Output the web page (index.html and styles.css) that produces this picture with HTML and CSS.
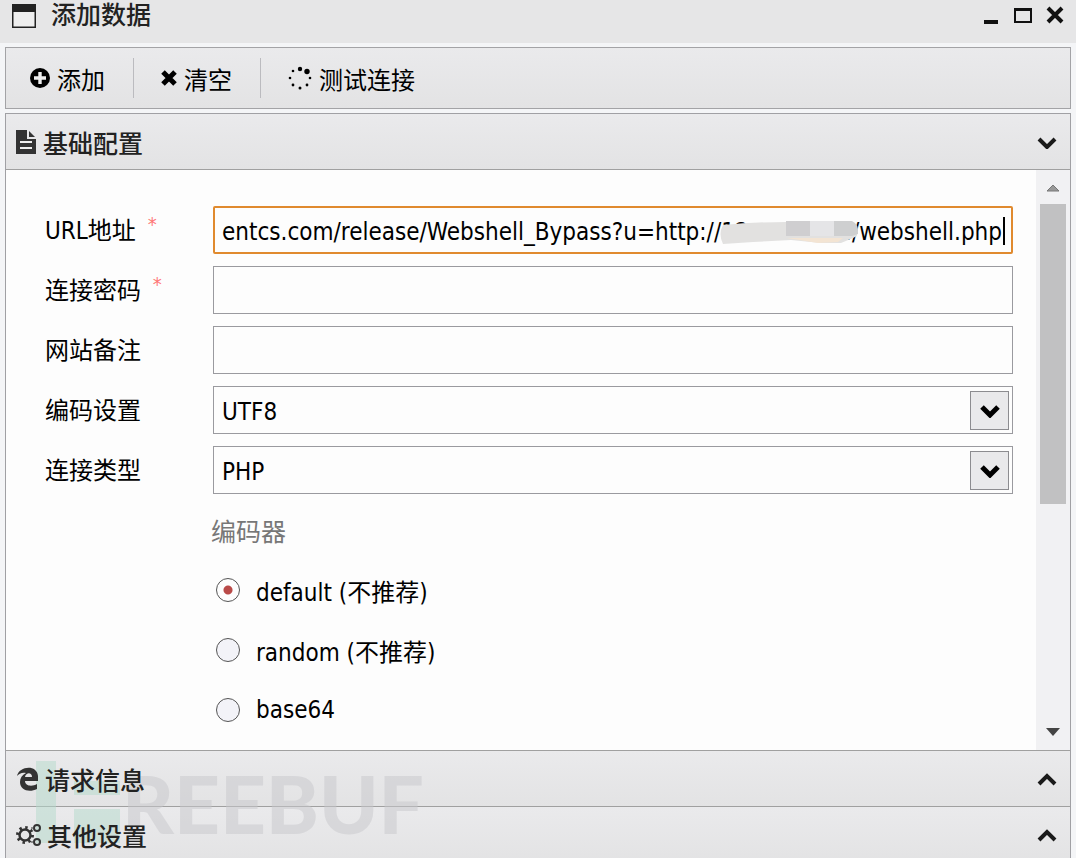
FILE: index.html
```html
<!DOCTYPE html>
<html lang="zh-CN">
<head>
    <meta charset="UTF-8">
    <meta name="viewport" content="width=device-width, initial-scale=1.0">
    <title>添加数据</title>

    <link rel="stylesheet" href="styles.css">
</head>
<body>

    <div class="window">
        <header class="title-bar">
            <svg class="window-icon" width="24" height="24" viewBox="0 0 24 24"><path d="M1 1h22v22H1z" fill="#eee"/><path d="M0 0h24v24H0zM1.500 8v14.500h21V8z" fill="#222" fill-rule="evenodd"/></svg>
            <h1>添加数据</h1>
            <div class="window-buttons">
                <button type="button" aria-label="最小化"><svg width="20" height="20" viewBox="0 0 20 20"><path d="M3 14h14v4H3z" fill="#111"/></svg></button>
                <button type="button" aria-label="最大化"><svg width="20" height="20" viewBox="0 0 20 20"><path d="M1 2h18v15H1zM3 5v10h14V5z" fill="#111" fill-rule="evenodd"/></svg></button>
                <button type="button" aria-label="关闭"><svg width="20" height="20" viewBox="0 0 20 20"><path d="M3 2l14 14M17 2L3 16" stroke="#111" stroke-width="4"/></svg></button>
            </div>
        </header>

        <div class="toolbar">
            <button type="button">
                <svg width="20" height="20" viewBox="0 0 20 20"><circle cx="10" cy="10" r="10"/><path d="M10 4v12M4 10h12" stroke="#eee" stroke-width="3.4"/></svg>
                添加
            </button>
            <button type="button">
                <svg width="16" height="20" viewBox="0 0 16 20"><path d="M2 4l12 12M14 4L2 16" stroke="#000" stroke-width="5"/></svg>
                清空
            </button>
            <button type="button">
                <svg width="24" height="24" viewBox="0 0 24 24"><circle cx="12" cy="3" r="2.2"/><circle cx="19" cy="5.500" r="2.700"/><circle cx="5" cy="5" r="1.300"/><circle cx="2" cy="12" r="1.300"/><circle cx="22" cy="12" r="1.300"/><circle cx="5" cy="19" r="1.400"/><circle cx="19" cy="19" r="1.400"/><circle cx="12" cy="22" r="1.500"/></svg>
                测试连接
            </button>
        </div>

        <main class="accordion">
            <button type="button" class="section-head">
                <svg width="22" height="24" viewBox="0 0 22 24"><path d="M0 0h11v9h9v15H0z" fill="#333"/><path d="M13 1l6 6h-6z" fill="#333"/><path d="M4 12h12M4 18h12" stroke="#eee" stroke-width="2"/></svg>
                <span>基础配置</span>
                <svg class="chevron" width="20" height="14" viewBox="0 0 20 14"><path d="M2 4l8 8 8-8" fill="none" stroke="#1a1a1a" stroke-width="4"/></svg>
            </button>

            <div class="section-body">
                <form class="config">
                    <div class="row">
                        <label for="url">URL地址 <span class="required">*</span></label>
                        <div class="field">
                            <input type="text" id="url" class="focused" value="entcs.com/release/Webshell_Bypass?u=http://12              :/webshell.php">
                            <svg class="mask" width="152" height="26" viewBox="0 0 152 26"><path d="M10 5Q40 2 74 2H138Q144 4 144 16L140 18 128 23H108L78 20 40 22 10 24Q5 14 10 5z" fill="#e2e1e0"/><path d="M74 18h56l-5 4-20 1z" fill="#f3e4d3"/><path d="M73 1h24v15H73z" fill="#cfced0"/><path d="M97 1h24v15H97z" fill="#e5e5e7"/><path d="M121 1h18q7 3 6 13l-6 2h-18z" fill="#cecfd0"/></svg>
                            <span class="caret"></span>
                        </div>
                    </div>
                    <div class="row">
                        <label for="password">连接密码 <span class="required">*</span></label>
                        <div class="field"><input type="text" id="password"></div>
                    </div>
                    <div class="row">
                        <label for="note">网站备注</label>
                        <div class="field"><input type="text" id="note"></div>
                    </div>
                    <div class="row">
                        <label for="encode">编码设置</label>
                        <div class="field">
                            <select id="encode"><option>UTF8</option></select>
                            <span class="arrow"><svg width="20" height="14" viewBox="0 0 20 14"><path d="M2 3l8 8 8-8" fill="none" stroke="#000" stroke-width="5"/></svg></span>
                        </div>
                    </div>
                    <div class="row">
                        <label for="type">连接类型</label>
                        <div class="field">
                            <select id="type"><option>PHP</option></select>
                            <span class="arrow"><svg width="20" height="14" viewBox="0 0 20 14"><path d="M2 3l8 8 8-8" fill="none" stroke="#000" stroke-width="5"/></svg></span>
                        </div>
                    </div>
                    <div class="encoders" role="radiogroup" aria-labelledby="encoderTitle">
                        <p id="encoderTitle">编码器</p>
                        <label><input type="radio" name="encoder" checked> default (不推荐)</label>
                        <label><input type="radio" name="encoder"> random (不推荐)</label>
                        <label><input type="radio" name="encoder"> base64</label>
                    </div>
                </form>
                <div class="scrollbar">
                    <svg width="14" height="8" viewBox="0 0 14 8"><path d="M1 7l6-6 6 6z" fill="#999" stroke="#777"/></svg>
                    <div class="thumb"></div>
                    <svg width="14" height="8" viewBox="0 0 14 8"><path d="M0 0h14L7 8z" fill="#444"/></svg>
                </div>
            </div>

            <button type="button" class="section-head">
                <svg width="24" height="24" viewBox="0 0 24 24"><path d="M1 9C3-1 21-3 22 9v5H9c0 5 7 6 12 3v5C13 26 4 23 4 15c0-4 2-7 6-9-4-1-7 1-9 3zM9 10h7c0-5-6-5-7 0z" fill="#333" fill-rule="evenodd"/></svg>
                <span>请求信息</span>
                <svg class="chevron" width="20" height="14" viewBox="0 0 20 14"><path d="M2 12l8-8 8 8" fill="none" stroke="#1a1a1a" stroke-width="4"/></svg>
            </button>
            <button type="button" class="section-head">
                <svg width="26" height="24" viewBox="0 0 26 24" fill="none" stroke="#333"><circle cx="9" cy="12" r="5.500" stroke-width="2.500"/><circle cx="9" cy="12" r="7.500" stroke-width="3" stroke-dasharray="2.400 3.490"/><circle cx="21" cy="5" r="3" stroke-width="2"/><circle cx="21" cy="19" r="3" stroke-width="2"/><path d="M17 5h-2M17 19h-2"/></svg>
                <span>其他设置</span>
                <svg class="chevron" width="20" height="14" viewBox="0 0 20 14"><path d="M2 12l8-8 8 8" fill="none" stroke="#1a1a1a" stroke-width="4"/></svg>
            </button>
        </main>

        <div class="watermark">
            <svg width="86" height="84" viewBox="0 0 86 84"><path d="M0 0h20v82H0zM38 20h46v14H38zM38 48h46v34H38z" fill="#b5dbcc"/></svg>
            <span>REEBUF</span>
        </div>
    </div>

</body>
</html>
```
FILE: styles.css
```css
* {
    box-sizing: border-box;
}

body {
    margin: 0;
    height: 100vh;
    overflow: hidden;
    background-color: #f4f5f7;
    color: #000;
    font-family: "DejaVu Sans Condensed", "Noto Sans CJK SC", sans-serif;
    font-size: 24px;
}

button,
input,
select {
    font: inherit;
    color: inherit;
}

button {
    background: none;
    border: none;
    padding: 0;
    cursor: pointer;
}

svg {
    flex: none;
    display: block;
}

.window {
    position: relative;
    height: 100vh;
    overflow: hidden;
}

/* title bar */
.title-bar {
    display: flex;
    align-items: center;
    gap: 15px;
    height: 43px;
    padding: 0 11px 11px 12px;
    background-color: #e6e6e7;
}

.title-bar h1 {
    flex: 1;
    margin: 0;
    color: #222;
    font-size: 25px;
    font-weight: 500;
    line-height: 32px;
}

.window-buttons {
    display: flex;
    gap: 12px;
}

/* toolbar */
.toolbar {
    display: flex;
    align-items: center;
    height: 62px;
    margin: 4px 5px;
    border: 1px solid #a3a3a6;
    background: linear-gradient(#eaeaec, #e3e3e4);
}

.toolbar button {
    display: flex;
    align-items: center;
    gap: 7px;
    height: 40px;
    padding: 0 28px 0 27px;
    border-left: 1px solid #bbbbbf;
}

.toolbar button:first-child {
    padding-left: 24px;
    border-left: none;
}

/* accordion */
.accordion {
    margin: 0 5px;
    border: 1px solid #a0a0a4;
}

.section-head {
    display: flex;
    align-items: center;
    gap: 5px;
    width: 100%;
    height: 56px;
    padding: 0 13px 0 10px;
    border-bottom: 1px solid #a0a0a0;
    background: linear-gradient(#eaeaec, #e3e3e4);
    color: #222;
    font-size: 25px;
    font-weight: 500;
}

/* keeps the titles and icons above the watermark */
.section-head span,
.section-head svg {
    position: relative;
    z-index: 1;
}

.chevron {
    margin-left: auto;
}

.section-body {
    display: flex;
    height: 581px;
    border-bottom: 1px solid #a0a0a0;
    background-color: #fdfdfd;
}

.config {
    flex: 1;
    display: flex;
    flex-direction: column;
    gap: 12px;
    padding: 36px 23px 0 39px;
}

.row {
    display: flex;
    align-items: center;
    height: 48px;
}

.row > label {
    flex: none;
    width: 168px;
    padding-bottom: 4px;
}

.required {
    margin-left: 5px;
    color: #f77;
    font-size: 20px;
    line-height: 20px;
    vertical-align: 8px;
}

.field {
    position: relative;
    flex: 1;
}

.field input,
.field select {
    display: block;
    width: 100%;
    height: 48px;
    padding: 3px 8px 0;
    border: 1px solid #9a9a9f;
    border-radius: 0;
    background-color: #fdfdfd;
    outline: none;
    appearance: none;
}

.field .focused {
    padding: 3px 7px 0;
    border: 2px solid #e08a2e;
    border-radius: 2px;
}

.mask {
    position: absolute;
    top: 14px;
    right: 148px;
}

.caret {
    position: absolute;
    top: 11px;
    right: 8px;
    width: 2px;
    height: 28px;
    background-color: #000;
}

.arrow {
    position: absolute;
    top: 5px;
    right: 4px;
    display: flex;
    align-items: center;
    justify-content: center;
    width: 39px;
    height: 39px;
    border: 1px solid #8c8c90;
    background-color: #e9e9eb;
    pointer-events: none;
}

/* encoder list */
.encoders {
    display: flex;
    flex-direction: column;
    margin-left: 166px;
}

.encoders p {
    height: 54px;
    margin: 0;
    color: #777;
    font-size: 25px;
    line-height: 54px;
}

.encoders label {
    display: flex;
    align-items: center;
    gap: 16px;
    height: 60px;
    padding-left: 5px;
}

.encoders input {
    width: 24px;
    height: 24px;
    margin: 0;
    border: 1px solid #555;
    border-radius: 50%;
    background-color: #f3f3f8;
    appearance: none;
}

.encoders input:checked {
    background: radial-gradient(circle, #b94a48 4px, #fdfdfd 5px);
}

/* scrollbar */
.scrollbar {
    display: flex;
    flex-direction: column;
    align-items: center;
    width: 34px;
    padding: 14px 0;
    background-color: #f1f1f3;
}

.scrollbar svg:last-child {
    margin-top: auto;
}

.thumb {
    width: 26px;
    height: 300px;
    margin-top: 12px;
    background-color: #c1c1c2;
}

/* watermark */
.watermark {
    position: absolute;
    left: 36px;
    top: 756px;
    display: flex;
    align-items: center;
    opacity: 0.5;
    color: #c8c8cc;
    font-family: Lato, sans-serif;
    font-size: 80px;
    font-weight: 900;
    line-height: 94px;
    pointer-events: none;
}
```
